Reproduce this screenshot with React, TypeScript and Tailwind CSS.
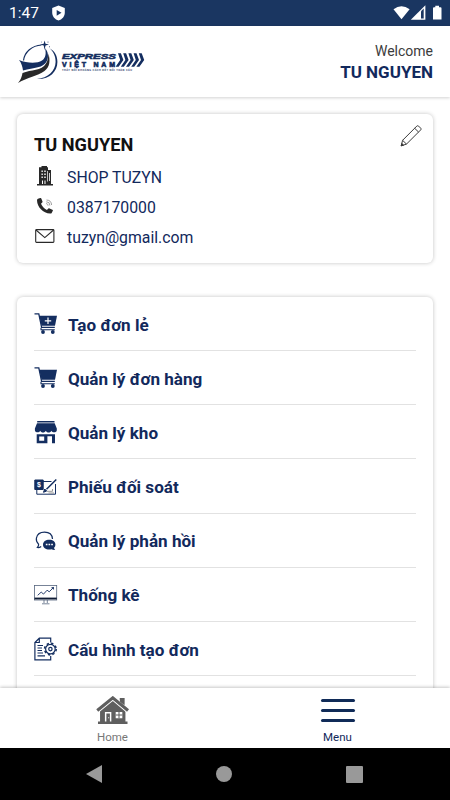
import type { ReactNode } from "react";

const NAVY = "#142e60";

const Logo = () => (
  <svg className="h-11 w-[130px]" viewBox="16 40 130 44" fill={NAVY}>
    <path d="M23.5 60.5C24.5 52 32 45.5 41.5 45" fill="none" stroke={NAVY} strokeWidth="1.2" />
    <path d="M49.5 48.2C55 51 57.4 56 57.4 62C57.4 72 49 79.6 37 79C48 78 55.4 71 55.6 62C55.6 56 53.5 51.5 49.5 48.2Z" />
    <path d="M44.6 40.5L45.5 43.7L49 44.6L45.5 45.6L44.6 50L43.7 45.6L40 44.6L43.7 43.7Z" />
    <circle cx="48" cy="42" r=".5" />
    <circle cx="49.5" cy="46.8" r=".5" />
    <circle cx="41.5" cy="42" r=".4" />
    <path d="M19 60C27 63.3 37 63.8 42 60.5C46 57.8 46.2 53 45 48C48.2 51.5 48.8 57 47 60.8C43.5 68.5 34 67.5 23 70.5C22.4 66.5 21.5 63 19 60Z" />
    <path d="M48.4 53.5C50.4 60 50 67 44.5 71C37.5 76 27.5 77.5 18 83C20.6 80 22 76.5 22.5 73C31 69.5 41.5 71 46 63.5C47.8 60.5 48.5 57 48.4 53.5Z" fill="#292929" />
    <text x="62" y="58.7" textLength="54" lengthAdjust="spacingAndGlyphs" className="font-['Liberation_Sans'] text-[7px] font-bold italic" stroke={NAVY} strokeWidth=".5">EXPRESS</text>
    <text x="62" y="66.7" textLength="53" lengthAdjust="spacing" className="font-['Liberation_Sans'] text-[7px] font-bold" stroke={NAVY} strokeWidth=".6">VIỆT NAM</text>
    <text x="62" y="71" textLength="70" lengthAdjust="spacing" className="font-['Inter'] text-[2.4px] font-bold">THẮT NỐI KHOẢNG CÁCH KẾT NỐI TOÀN CẦU</text>
    {[0, 5.2, 10.4, 15.6, 20.8].map((x) => (
      <path key={x} transform={`translate(${x} 0)`} d="M118 53.2H120.9L123.4 60L118.6 66.8H115.6L120.2 60Z" />
    ))}
  </svg>
);

const Building = () => (
  <svg className="h-5 w-4" viewBox="0 0 16 20" fill="#282828">
    <path d="M3 1.3H4.5V0H10V1.3H11V4H14V18H16V19.5H0V18H2V1.3Z" />
    <path d="M4.5 4.5H5.8V6H4.5ZM7.3 4.5H8.7V6H7.3ZM4.5 7.5H5.8V9H4.5ZM7.3 7.5H8.7V9H7.3ZM4.5 10.5H5.8V12H4.5ZM7.3 10.5H8.7V12H7.3ZM10.3 5H11V15.5H10.3ZM12 7H12.8V15H12ZM5 14.5H6V18H5ZM7.5 14.5H8.5V18H7.5Z" fill="white" />
  </svg>
);

const Phone = () => (
  <svg className="size-4" viewBox="0 0 16 16" fill="#282828">
    <path d="M1 .8L3.2 0C3.8-.1 4.1.2 4.3.6L5.5 3.6C5.6 4 5.5 4.3 5.2 4.6L4 5.8C5.1 8.4 7 10.5 9.9 12L11.4 10.6C11.7 10.3 12.1 10.2 12.5 10.4L15.4 11.7C15.9 12 16 12.3 15.8 12.7L14.8 14.8C14.5 15.5 13.9 15.7 13.2 15.6C5.8 15 .3 9 0 2.4C0 1.6.4 1 1 .8Z" />
    <path d="M9 5.7A1.7 1.7 0 0 1 11 7.7M9.3 3.8A3.6 3.6 0 0 1 12.9 7.5M9.5 2A5.3 5.3 0 0 1 14.6 7" fill="none" stroke="#777" strokeWidth=".7" />
  </svg>
);

const Mail = () => (
  <svg className="h-[14px] w-5" viewBox="0 0 20 14" fill="none" stroke="#292929" strokeWidth="1.1">
    <rect x=".7" y=".6" width="18.2" height="12.8" rx=".8" />
    <path d="M1 1L9.8 8.6L18.6 1" />
  </svg>
);

const Pencil = () => (
  <svg className="size-[22px]" viewBox="0 0 22 22" fill="none" stroke="#3a3a3a" strokeWidth="1">
    <path d="M1.2 20.8L2.6 15.3L16.8 1.1Q17.7.3 18.6 1.1L20.8 3.3Q21.5 4.1 20.7 4.9L6.5 19.1ZM2.6 15.3L6.5 19.1M14.7 3.3L18.6 7.1" />
    <path d="M1.2 20.8L1.8 18.5L3.5 20.2Z" fill="#292929" />
  </svg>
);

const Cart = ({ plus }: { plus?: boolean }) => (
  <svg className="mb-[3px] size-6" viewBox="0 0 24 24" fill={NAVY}>
    <path d="M.5 2.8H4.8L7.6 16.4H20.8" fill="none" stroke={NAVY} strokeWidth="1.3" />
    <path d="M5.2 4.7H23L21 14.8H7.5Z" />
    <path d="M7 16.8V18.8H20.8" fill="none" stroke={NAVY} strokeWidth="1.1" />
    <circle cx="9" cy="21" r="1.9" />
    <circle cx="18.8" cy="21" r="1.9" />
    {plus && <path d="M14 6.5V13M10.8 9.8H17.2" stroke="white" strokeWidth="1.2" />}
  </svg>
);

const Store = () => (
  <svg className="mb-[2px] size-6" viewBox="0 0 24 24" fill={NAVY}>
    <path d="M3.2 1H20.5V2.4H3.2ZM3 3.2H20.7L22.8 8.5V10.2C22.8 12.7 18.4 13.2 17.5 10.8C16.5 13.2 12.7 13.2 11.8 10.8C10.9 13.2 7.1 13.2 6.2 10.8C5.2 13.2.9 12.7.9 10.2V8.5Z" />
    <path d="M2.7 14.2H21V23.3H18V16.2H13.4V23.3H2.7ZM5.2 16.4V20.8H10.2V16.4Z" fillRule="evenodd" />
  </svg>
);

const Checkbook = () => (
  <svg className="size-6" viewBox="0 0 24 24" fill="none" stroke={NAVY}>
    <path d="M9 6.5H17.5M21.5 9V19.2H2.8V15" strokeWidth="1" />
    <path d="M.8 5H9.2V14.5H.8Z" fill={NAVY} />
    <text x="3" y="12.3" className="font-['Liberation_Sans'] text-[7px] font-bold" fill="white" stroke="none">$</text>
    <path d="M22.3 4.5L12.5 14.3" strokeWidth="1.5" />
    <path d="M9.5 17.3L10.7 14L12.7 16Z" fill={NAVY} />
    <path d="M13 16.3H18.5V14M14.5 18H20" stroke="#999" />
  </svg>
);

const Chat = () => (
  <svg className="size-6" viewBox="0 0 24 24" fill="none" stroke={NAVY}>
    <path d="M7.2 17.5C5.8 18.5 4.7 18.8 3.4 18.5C4.4 17.5 4.7 16.5 4.6 15.2C2.7 13.5 2 11.5 2.4 9.2C3.2 5.2 6.5 3.2 10.5 3.2C15 3.2 18.2 5.8 18.5 10" strokeWidth="1.2" />
    <path d="M15.3 10.8C18.8 10.8 21.4 12.8 21.4 15.6C21.4 17.2 20.9 18 20.1 18.8C20.1 19.8 20.5 20.5 21.2 21C19.6 21.2 18.6 20.8 17.5 20.2C12.8 21.2 9 19 9 15.7C9 12.8 11.7 10.8 15.3 10.8Z" fill={NAVY} stroke="none" />
    <path d="M11.8 15.6H13.5M14.5 15.6H16.2M17.2 15.6H18.9" stroke="white" strokeWidth="1.5" />
  </svg>
);

const Chart = () => (
  <svg className="size-6" viewBox="0 0 24 24" fill="none" stroke="#56657e">
    <rect x=".5" y="2.5" width="22.2" height="14.5" strokeWidth=".8" />
    <path d="M.5 15.5H22.8" stroke="#101c35" strokeWidth="1.8" />
    <path d="M10 17V20M13.3 17V20M8 20.8H15.5" strokeWidth=".8" />
    <path d="M3.7 12.3L7.2 9.1L9.5 11.1L13.1 7.2L15.2 8.8L19.5 4.5M17.4 4.8L19.5 4.4V6.5" stroke={NAVY} strokeWidth=".9" />
  </svg>
);

const DocumentGear = () => (
  <svg className="size-6" viewBox="0 0 24 24" fill="none" stroke={NAVY} strokeWidth="1.2">
    <path d="M16.7 5.5V1.2H5.3L.9 5.5V22.8H16.7V19M5.3 1.2V5.5H.9" />
    <path d="M3.5 8.5H9M3.5 11H8M3.5 13.5H8M3.5 16H9M3.5 18.8H11" />
    <circle cx="16.4" cy="12.1" r="4.8" />
    <circle cx="16.4" cy="12.1" r="5.8" strokeWidth="1.6" strokeDasharray="2.28 2.28" />
    <circle cx="16.4" cy="12.1" r="1.7" />
  </svg>
);

const House = () => (
  <svg className="h-[29px] w-9" viewBox="0 0 34 28" fill="#5f5f5f">
    <path d="M23.5 2H28V12L23.5 7.5ZM4.5 14L17 3.5L29 14V24.5H31V27H2.5V24.5H4.5Z" />
    <path d="M1.8 14.2L16.8 1.8L31.5 14.2" fill="none" stroke="white" strokeWidth="4.6" />
    <path d="M23.8 2H28V9L23.8 5.5Z" />
    <path d="M1.8 14L16.8 1.8L31.5 14" fill="none" stroke="#5f5f5f" strokeWidth="3" />
    <path d="M9.2 15.5H15.4V24.5H14V17H10.6V24.5H9.2ZM19.6 15.5H26V21.5H19.6Z" fill="white" />
    <path d="M22.8 15.5V21.5M19.6 18.3H26" stroke="#5f5f5f" />
    <circle cx="12.8" cy="21" r=".6" fill="white" />
  </svg>
);

const menu: { label: string; icon: ReactNode }[] = [
  { label: "Tạo đơn lẻ", icon: <Cart plus /> },
  { label: "Quản lý đơn hàng", icon: <Cart /> },
  { label: "Quản lý kho", icon: <Store /> },
  { label: "Phiếu đối soát", icon: <Checkbook /> },
  { label: "Quản lý phản hồi", icon: <Chat /> },
  { label: "Thống kê", icon: <Chart /> },
  { label: "Cấu hình tạo đơn", icon: <DocumentGear /> },
];

const contacts: { label: string; icon: ReactNode }[] = [
  { label: "SHOP TUZYN", icon: <Building /> },
  { label: "0387170000", icon: <Phone /> },
  { label: "tuzyn@gmail.com", icon: <Mail /> },
];

const StatusBar = () => (
  <div className="flex h-[26px] shrink-0 items-center bg-[#1a3661] pr-2 pl-[9px] text-white">
    <span className="w-[30px] pt-[2px] text-[15.5px] leading-none">1:47</span>
    <svg className="ml-[13px] h-4 w-[13px]" viewBox="0 0 13 16">
      <path d="M6.5.5L12.8 3V7.5C12.8 11.5 10 14.5 6.5 15.5C3 14.5.2 11.5.2 7.5V3Z" fill="white" />
      <path d="M4.7 5L9.5 7.8L4.7 10.7Z" fill="#1a3661" />
    </svg>
    <svg className="ml-auto h-4 w-[50px]" viewBox="0 0 50 16" fill="white">
      <path d="M1.5 4.3Q9.5-1.8 17.6 4.3L9.5 14.2Z" />
      <path d="M18.8 14.8L33.4.2V14.8Z" />
      <path d="M29 6.3L31.7 3.6V13.6H29Z" fill="#1a3661" />
      <path d="M43.3 .7H47V2.2H48.5Q49.5 2.2 49.5 3.2V14.6H41V3.2Q41 2.2 42 2.2H43.3Z" />
    </svg>
  </div>
);

export default function App() {
  return (
    <div className="flex h-[800px] w-[450px] flex-col overflow-hidden bg-white font-[Roboto,sans-serif] text-[#12295c]">
      <StatusBar />
      <header className="flex h-[71px] shrink-0 items-center justify-between bg-white pr-[17px] pl-4 shadow-[0_1px_3px_rgba(0,0,0,0.18)]">
        <Logo />
        <div className="flex flex-col items-end">
          <span className="text-sm leading-5 text-[#3c3c3c]">Welcome</span>
          <span className="text-[17px] leading-[22px] font-bold">TU NGUYEN</span>
        </div>
      </header>

      <main className="min-h-0 flex-1 overflow-hidden px-[17px] pt-[17px]">
        <section className="flex h-[149px] justify-between rounded-md bg-white pt-[18px] pr-[11px] pl-[17px] shadow-[0_0_4px_rgba(0,0,0,0.24)]">
          <div>
            <h1 className="text-[18.2px] leading-[26px] font-bold text-[#111]">TU NGUYEN</h1>
            <ul className="mt-[3px]">
              {contacts.map((c) => (
                <li key={c.label} className="flex h-[30px] items-center gap-[11px]">
                  <span className="flex w-[22px] items-center justify-center">{c.icon}</span>
                  <span className="pt-[3px] text-[15.8px]">{c.label}</span>
                </li>
              ))}
            </ul>
          </div>
          <div className="-mt-[7px]">
            <Pencil />
          </div>
        </section>

        <nav className="mt-[34px] h-[450px] rounded-md bg-white px-[17px] shadow-[0_0_4px_rgba(0,0,0,0.24)]">
          {menu.map((m) => (
            <div key={m.label} className="flex h-[54.15px] items-center gap-[10px] border-b border-[#e2e2e2] pt-0.5">
              {m.icon}
              <span className="pt-[2px] text-[17.1px] font-bold">{m.label}</span>
            </div>
          ))}
        </nav>
      </main>

      <footer className="relative flex h-[60px] shrink-0 bg-white text-xs shadow-[0_-1px_3px_rgba(0,0,0,0.22)]">
        <div className="flex flex-1 flex-col items-center pt-2 text-[#777]">
          <House />
          <span className="mt-1 text-[11.5px] leading-4">Home</span>
        </div>
        <div className="flex flex-1 flex-col items-center pt-[11px]">
          <span className="flex w-[34px] flex-col gap-[7px]">
            <span className="h-[3px] rounded-full bg-[#102b58]" />
            <span className="h-[3px] rounded-full bg-[#102b58]" />
            <span className="h-[3px] rounded-full bg-[#102b58]" />
          </span>
          <span className="mt-[7px] text-[11.5px] leading-4">Menu</span>
        </div>
      </footer>

      <div className="relative flex h-[52px] shrink-0 items-center justify-between bg-black pr-[87px] pl-[86px]">
        <svg className="h-[18px] w-4" viewBox="0 0 16 18" fill="#999">
          <path d="M0 9L16 0V18Z" />
        </svg>
        <span className="size-4 rounded-full bg-[#999]" />
        <span className="size-[17px] rounded-[1px] bg-[#999]" />
      </div>
    </div>
  );
}
